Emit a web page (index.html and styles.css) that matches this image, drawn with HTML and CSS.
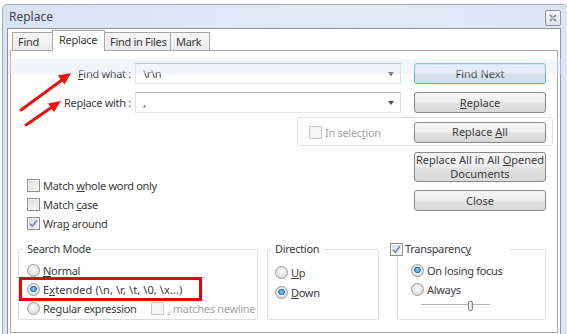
FILE: index.html
```html
<!DOCTYPE html>
<html lang="en">
<head>
  <meta charset="UTF-8">
  <title>Replace</title>
  <link rel="stylesheet" href="styles.css">
</head>
<body>
  <div class="window">
    <div class="titlebar">
      <span class="title">Replace</span>
      <span class="close-btn">
        <svg width="10" height="10" viewBox="0 0 10 10"><path d="M2 2 L8 8 M8 2 L2 8" stroke="#7a7a7a" stroke-width="1.6"/><path d="M3.5 5 H6.5" stroke="#fff" stroke-width="1"/></svg>
      </span>
    </div>
    <div class="client">
      <ul class="tabs">
        <li class="tab tab-find">Find</li>
        <li class="tab tab-replace active">Replace</li>
        <li class="tab tab-files">Find in Files</li>
        <li class="tab tab-mark">Mark</li>
      </ul>
      <div class="panel">
        <div class="row">
          <label class="field-label"><u>F</u>ind what :</label>
          <div class="combo"><span class="combo-text">\r\n</span><span class="combo-arrow"></span></div>
          <button class="btn btn-default">Find Next</button>
        </div>
        <div class="row row-gap">
          <label class="field-label">Rep<u>l</u>ace with :</label>
          <div class="combo"><span class="combo-text">,</span><span class="combo-arrow"></span></div>
          <button class="btn"><u>R</u>eplace</button>
        </div>
        <div class="sel-group">
          <span class="check disabled"></span>
          <span class="muted">In selec<u>t</u>ion</span>
          <button class="btn">Replace <u>A</u>ll</button>
        </div>
        <div class="options">
          <div class="check-list">
            <div class="check-row"><span class="check"></span><span>Match <u>w</u>hole word only</span></div>
            <div class="check-row"><span class="check"></span><span>Match <u>c</u>ase</span></div>
            <div class="check-row"><span class="check checked"><svg width="11" height="11" viewBox="0 0 11 11"><path d="M2.2 5.8 L4.4 8.4 L8.8 2.2" fill="none" stroke="#6b82b6" stroke-width="1.5"/></svg></span><span>Wra<u>p</u> around</span></div>
          </div>
          <div class="btn-col">
            <button class="btn btn-tall">Replace All in All <u>O</u>pened<br>Documents</button>
            <button class="btn btn-close">Close</button>
          </div>
        </div>
        <div class="groups">
          <fieldset class="group group-mode">
            <legend>Search Mode</legend>
            <div class="radio-row"><span class="radio"></span><span><u>N</u>ormal</span></div>
            <div class="radio-row"><span class="radio on"></span><span class="wide-text">E<u>x</u>tended (\n, \r, \t, \0, \x...)</span></div>
            <div class="radio-row"><span class="radio"></span><span>Re<u>g</u>ular expression</span><span class="check disabled newline-check"></span><span class="muted"><u>.</u> matches newline</span></div>
          </fieldset>
          <fieldset class="group group-dir">
            <legend>Direction</legend>
            <div class="radio-row tall"><span class="radio"></span><span><u>U</u>p</span></div>
            <div class="radio-row tall"><span class="radio on"></span><span><u>D</u>own</span></div>
          </fieldset>
          <fieldset class="group group-trans">
            <legend class="legend-check"><span class="check checked"><svg width="11" height="11" viewBox="0 0 11 11"><path d="M2.2 5.8 L4.4 8.4 L8.8 2.2" fill="none" stroke="#6b82b6" stroke-width="1.5"/></svg></span><span>Transparenc<u>y</u></span></legend>
            <div class="radio-row"><span class="radio on"></span><span>On losing focus</span></div>
            <div class="radio-row"><span class="radio"></span><span>Always</span></div>
            <div class="slider"><span class="slider-thumb"></span></div>
          </fieldset>
        </div>
      </div>
    </div>
  </div>
  <!-- red annotation marks drawn over the dialog -->
  <svg class="marks" width="567" height="334" viewBox="0 0 567 334">
    <rect x="8" y="59" width="559" height="15" fill="#dfe3f8" fill-opacity="0.4"/>
    <line x1="21" y1="110" x2="62" y2="80" stroke="#ee1111" stroke-width="3" stroke-linecap="round"/>
    <polygon points="71,73 64.5,84.5 57.8,75.6" fill="#ee1111"/>
    <line x1="26" y1="125" x2="52" y2="107" stroke="#ee1111" stroke-width="3" stroke-linecap="round"/>
    <polygon points="61,101 54,112 48,103.5" fill="#ee1111"/>
    <rect x="20.5" y="278.5" width="180" height="21" fill="none" stroke="#e8000b" stroke-width="3"/>
  </svg>
</body>
</html>
```

FILE: styles.css
```css
* {
  padding: 0;
  margin: 0;
  box-sizing: border-box;
}
html,body {
  width: 100%;
  height: 100%;
}
body {
  position: relative;
  overflow: hidden;
  background: #fff;
  font-family: "Noto Sans", "DejaVu Sans", sans-serif;
  font-size: 11px;
  letter-spacing: -0.3px;
  color: #3b3b3b;
}
ul {
  list-style: none;
}
u {
  text-decoration: underline;
  text-underline-offset: 1px;
}
.window {
  margin: 4px 0 0 2px;
  width: 566px;
  height: 340px;
  border: 1px solid #9ea9b6;
  border-radius: 5px 5px 0 0;
  background: linear-gradient(90deg, #d8e4f4, #e2eaf7 60%, #dbe6f5);
  padding: 0 6px 0 4px;
}
.titlebar {
  height: 23px;
  display: flex;
  align-items: center;
  justify-content: space-between;
  padding-left: 2px;
}
.title {
  font-size: 12px;
  letter-spacing: 0;
  color: #444;
}
.close-btn {
  width: 16px;
  height: 16px;
  margin-top: 3px;
  border: 1px solid #8f949a;
  border-radius: 2px;
  background: linear-gradient(#f5f7fa, #dfe4ea);
  display: flex;
  align-items: center;
  justify-content: center;
}
.client {
  height: 320px;
  border: 1px solid #8f969e;
  background: #fff;
  padding: 1px 2px 0 2px;
}

/* tabs */
.tabs {
  display: flex;
  align-items: flex-end;
  height: 20px;
  padding-left: 2px;
  position: relative;
  z-index: 1;
}
.tab {
  height: 18px;
  line-height: 17px;
  padding-left: 5px;
  margin-right: -1px;
  border: 1px solid #a7a7a7;
  border-bottom: none;
  background: linear-gradient(#f7f7f7, #ececec);
  color: #3a3a3a;
}
.tab-find { width: 41px; }
.tab-replace { width: 53px; }
.tab-files { width: 67px; }
.tab-mark { width: 40px; }
.tab.active {
  height: 21px;
  line-height: 18px;
  margin-bottom: -1px;
  padding-left: 6px;
  background: #fff;
  position: relative;
}

.panel {
  height: 283px;
  border: 1px solid #a9a9a9;
  padding: 12px 11px 0 0;
}
.row {
  display: flex;
  align-items: center;
  height: 21px;
}
.row-gap {
  margin-top: 8px;
}
.field-label {
  width: 120px;
  margin-right: 4px;
  text-align: right;
}
.combo {
  width: 266px;
  height: 21px;
  border: 1px solid;
  border-color: #abadb3 #dbdfe6 #e3e9ef #e2e3ea;
  display: flex;
  align-items: center;
  justify-content: space-between;
  padding: 0 6px 0 7px;
}
.combo-arrow {
  width: 0;
  height: 0;
  border-left: 3.5px solid transparent;
  border-right: 3.5px solid transparent;
  border-top: 4px solid #4f4f4f;
}
.btn {
  width: 132px;
  height: 21px;
  margin-left: auto;
  border: 1px solid #8a8a8a;
  border-radius: 3px;
  background: linear-gradient(#f6f6f6, #eeeeee 45%, #e2e2e2 55%, #d9d9d9);
  font: inherit;
  color: #3b3b3b;
  line-height: 14px;
}
.btn-default {
  border-color: #5fa8dc;
  background: linear-gradient(#f1f7fb, #e6eff5 45%, #d9e4ec 55%, #d0dde6);
  box-shadow: inset 0 0 0 1px #c6e4f6;
}

.sel-group {
  display: flex;
  align-items: center;
  margin: 4px -7px 0 286px;
  height: 29px;
  border: 1px solid #dde3e8;
  border-radius: 3px;
  padding: 1px 6px 0 11px;
}
.sel-group .check {
  margin-right: 3px;
}
.muted {
  color: #a4a4a4;
}

.options {
  display: flex;
}
.check-list {
  flex: 1;
  padding: 30px 0 0 16px;
}
.check-row {
  display: flex;
  align-items: center;
  gap: 3px;
  height: 19px;
}
.btn-col {
  width: 132px;
  padding-top: 6px;
}
.btn-tall {
  height: 30px;
  display: block;
  padding: 0;
}
.btn-close {
  display: block;
  margin-top: 8px;
}

.check {
  width: 13px;
  height: 13px;
  flex: none;
  border: 1px solid #8e8f8f;
  background: linear-gradient(135deg, #dadada, #f7f7f7);
  box-shadow: inset 0 0 0 1px #f3f3f3;
  display: flex;
  align-items: center;
  justify-content: center;
}
.check.disabled {
  border-color: #c9c9c9;
  background: #f5f5f5;
  box-shadow: none;
}
.radio {
  width: 13px;
  height: 13px;
  flex: none;
  border-radius: 50%;
  border: 1px solid #9a9a9a;
  background: radial-gradient(circle at 50% 40%, #fbfbfb, #dedede 70%, #cfcfcf);
}
.radio.on {
  background:
    radial-gradient(circle at 50% 45%, #a9dcf7 0, #4d98cf 2px, #2c6c9f 3px, rgba(255,255,255,0.8) 3.6px, transparent 4.4px),
    radial-gradient(circle at 50% 40%, #fbfbfb, #dedede 70%, #cfcfcf);
}

.groups {
  display: flex;
  margin: 9px 0 0 7px;
}
.group {
  min-width: 0;
  height: 78px;
  border: 1px solid #d8e0e6;
  border-radius: 3px;
  padding: 5px 0 0 8px;
}
.group legend {
  line-height: 14px;
  padding: 0 4px;
  margin-left: -4px;
}
.group-mode {
  width: 240px;
}
.group-dir {
  width: 112px;
  margin-left: 9px;
  padding: 6px 0 0 7px;
}
.group-trans {
  width: 149px;
  margin-left: 18px;
  padding-left: 13px;
}
.group .legend-check {
  width: 120px;
  display: flex;
  align-items: center;
  gap: 2px;
  padding: 0;
  margin-left: -21px;
}
.radio-row {
  display: flex;
  align-items: center;
  gap: 3px;
  height: 19px;
  white-space: nowrap;
}
.radio-row.tall {
  height: 20px;
}
.wide-text {
  letter-spacing: 0.1px;
}
.newline-check {
  margin: 0 1px 0 11px;
}
.slider {
  position: relative;
  width: 69px;
  height: 14px;
  margin-left: 10px;
  display: flex;
  align-items: center;
}
.slider::before {
  content: "";
  width: 100%;
  height: 2px;
  border-top: 1px solid #b4b4b4;
  border-bottom: 1px solid #f4f4f4;
}
.slider-thumb {
  position: absolute;
  left: 47px;
  top: 2px;
  width: 5px;
  height: 10px;
  border: 1px solid #8a8a8a;
  border-radius: 2px;
  background: linear-gradient(90deg, #f4f4f4, #dcdcdc);
}

.marks {
  position: absolute;
  top: 0;
  left: 0;
  pointer-events: none;
}
```
